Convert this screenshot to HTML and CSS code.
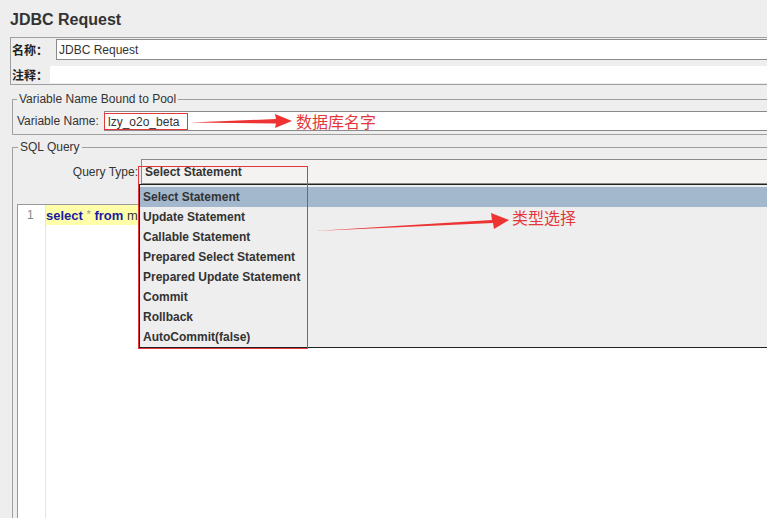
FILE: index.html
```html
<!DOCTYPE html>
<html lang="zh">
<head>
    <meta charset="UTF-8">
    <title>JDBC Request</title>
    <link rel="stylesheet" href="styles.css">
</head>
<body>
    <div class="page">
        <div class="title">JDBC Request</div>

        <div class="name-box">
            <div class="row name-row">
                <span class="cn-label name-label">名称：</span>
                <div class="text-field">JDBC Request</div>
            </div>
            <div class="row comment-row">
                <span class="cn-label comment-label">注释：</span>
                <div class="plain-field"></div>
            </div>
        </div>

        <fieldset class="group pool-group">
            <legend>Variable Name Bound to Pool</legend>
            <div class="row var-row">
                <span class="var-label">Variable Name:</span>
                <div class="text-field var-field">lzy_o2o_beta</div>
            </div>
        </fieldset>

        <fieldset class="group sql-group">
            <legend>SQL Query</legend>
            <div class="row type-row">
                <span class="type-label">Query Type:</span>
                <div class="combo">Select Statement</div>
            </div>
            <div class="editor">
                <div class="gutter"><div class="line-no">1</div></div>
                <div class="code">
                    <div class="code-line current"><span class="kw">select</span> <span class="op">*</span> <span class="kw">from</span> m</div>
                </div>
            </div>
        </fieldset>

        <ul class="popup">
            <li class="selected">Select Statement</li>
            <li>Update Statement</li>
            <li>Callable Statement</li>
            <li>Prepared Select Statement</li>
            <li>Prepared Update Statement</li>
            <li>Commit</li>
            <li>Rollback</li>
            <li>AutoCommit(false)</li>
        </ul>

        <!-- red annotations drawn over the screenshot -->
        <div class="mark mark-name"></div>
        <div class="mark mark-type"></div>
        <svg class="arrows" width="767" height="518" viewBox="0 0 767 518">
            <polygon points="190,122.5 276,119 275,114 292,121 275,128 276,123.5" fill="#ee3333"/>
            <polygon points="315,231 492,220 491,213 509,220 494,229 493,223" fill="#ee3333"/>
        </svg>
        <div class="note note-name">数据库名字</div>
        <div class="note note-type">类型选择</div>
    </div>
</body>
</html>
```

FILE: styles.css
```css
html, body {
    margin: 0;
    overflow: hidden;
}
body {
    background-color: #eeeeee;
    font-family: "Liberation Sans", "Noto Sans CJK SC", sans-serif;
    font-size: 12px;
    color: #222;
}
.page {
    position: relative;
    width: 767px;
    height: 518px;
    overflow: hidden;
}
.title {
    font-size: 16px;
    font-weight: bold;
    line-height: 20px;
    padding: 10px 0 0 10px;
    margin-bottom: 7px;
    color: #333;
}
.row {
    display: flex;
    align-items: center;
}
.name-box {
    margin: 0 -10px 0 10px;
    border: 1px solid #a0a0a0;
    height: 46px;
    padding-left: 1px;
}
.cn-label {
    font-family: "Noto Sans CJK SC", sans-serif;
    font-weight: bold;
    font-size: 12px;
}
.name-row {
    margin-top: 1px;
    height: 21px;
}
.name-label {
    width: 44px;
}
.text-field {
    flex: 1;
    box-sizing: border-box;
    height: 100%;
    background: white;
    border: 1px solid #8a8a8a;
    padding: 1px 0 0 2px;
    line-height: 18px;
    color: #333;
}
.comment-row {
    margin-top: 6px;
    height: 17px;
}
.comment-label {
    width: 38px;
}
.plain-field {
    flex: 1;
    height: 100%;
    background: white;
}
.group {
    margin: 0 -10px 0 12px;
    border: 1px solid #a0a0a0;
    padding: 5px 0 3px 4px;
    min-width: 0;
}
.group legend {
    font-size: 12px;
    line-height: 14px;
    padding: 0 2px;
    color: #333;
}
.pool-group {
    margin-top: 7px;
}
.var-row {
    height: 20px;
}
.var-label {
    width: 87px;
    color: #333;
}
.var-field {
    padding-left: 3px;
}
.sql-group {
    margin-top: 5px;
    height: 400px;
}
.sql-group legend {
    margin-left: 1px;
}
.type-row {
    height: 25px;
}
.type-label {
    width: 121px;
    text-align: right;
    padding-right: 3px;
    color: #333;
}
.combo {
    flex: 1;
    box-sizing: border-box;
    height: 100%;
    background: #f4f3f1;
    border: 1px solid #8a8a8a;
    padding: 5px 0 0 3px;
    font-weight: bold;
    color: #333;
}
.editor {
    display: flex;
    margin-top: 20px;
    height: 330px;
    background: white;
    border-top: 1px solid #999;
    border-left: 1px solid #999;
}
.gutter {
    width: 27px;
    border-right: 1px solid #e4e4e4;
}
.line-no {
    height: 20px;
    line-height: 20px;
    padding-left: 9px;
    color: #888;
}
.code {
    flex: 1;
}
.code-line {
    height: 20px;
    line-height: 19px;
    font-size: 13px;
    color: #333;
}
.code-line.current {
    background: #ffffaa;
}
.kw {
    font-weight: bold;
    color: #1a1aa6;
}
.op {
    color: #999;
    font-size: 11px;
    vertical-align: 2px;
}
.popup {
    position: absolute;
    left: 139px;
    top: 184px;
    width: 640px;
    height: 159px;
    margin: 0;
    padding: 2px 0 1px 0;
    list-style: none;
    background: #eeeeee;
    border: 1px solid #222;
}
.popup li {
    height: 20px;
    line-height: 20px;
    padding-left: 3px;
    font-weight: bold;
    color: #333;
}
.popup li.selected {
    background: #a3b8cc;
}
.mark {
    position: absolute;
    border: 1px solid #e2383c;
}
.mark-name {
    left: 104px;
    top: 113px;
    width: 82px;
    height: 15px;
}
.mark-type {
    left: 138px;
    top: 166px;
    width: 168px;
    height: 181px;
}
.arrows {
    position: absolute;
    left: 0;
    top: 0;
}
.note {
    position: absolute;
    font-family: "Noto Sans CJK SC", sans-serif;
    font-size: 16px;
    line-height: 20px;
    color: #e2383c;
}
.note-name {
    left: 296px;
    top: 111px;
}
.note-type {
    left: 512px;
    top: 207px;
}
```
